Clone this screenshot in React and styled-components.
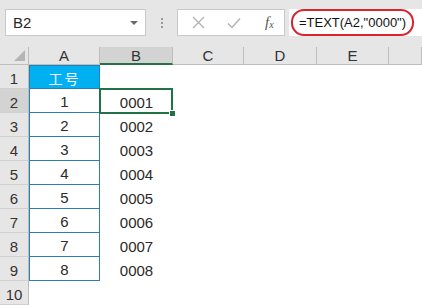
import React from "react";
import styled, { createGlobalStyle } from "styled-components";

const Global = createGlobalStyle`
  html, body { margin: 0; padding: 0; background: #e6e6e6; }
  body { font-family: "Liberation Sans", Arial, "Noto Sans CJK SC", sans-serif; }
`;

const columns = ["A", "B", "C", "D", "E", ""];
const rows = [
  { a: "工号", b: "" },
  { a: "1", b: "0001" },
  { a: "2", b: "0002" },
  { a: "3", b: "0003" },
  { a: "4", b: "0004" },
  { a: "5", b: "0005" },
  { a: "6", b: "0006" },
  { a: "7", b: "0007" },
  { a: "8", b: "0008" },
  { a: "", b: "" },
];

const App = () => (
  <Page>
    <Global />
    <FormulaBar>
      <NameBox>
        B2
        <Caret />
      </NameBox>
      <Grip>
        <span />
        <span />
        <span />
      </Grip>
      <Buttons>
        <IconBtn>
          <svg width="13" height="13" viewBox="0 0 13 13">
            <path d="M1 1L12 12M12 1L1 12" stroke="#b3b3b3" strokeWidth="1.4" fill="none" />
          </svg>
        </IconBtn>
        <IconBtn>
          <svg width="14" height="12" viewBox="0 0 14 12">
            <path d="M1 6.5L5 10.5L13 1.5" stroke="#b3b3b3" strokeWidth="1.5" fill="none" />
          </svg>
        </IconBtn>
        <Fx>
          f<sub>x</sub>
        </Fx>
      </Buttons>
      <Formula>
        <Oval>=TEXT(A2,"0000")</Oval>
      </Formula>
    </FormulaBar>

    <Sheet>
      <Corner>
        <svg width="11" height="11" viewBox="0 0 11 11">
          <path d="M11 0V11H0Z" fill="#b5b5b5" />
        </svg>
      </Corner>
      {columns.map((c, i) => (
        <ColHead key={i} $active={c === "B"}>
          {c}
        </ColHead>
      ))}
      {rows.map((r, i) => (
        <React.Fragment key={i}>
          <RowHead $active={i === 1}>{i + 1}</RowHead>
          {i < 9 ? (
            <BlueCell $title={i === 0} $first={i === 0}>
              {r.a}
            </BlueCell>
          ) : (
            <Cell />
          )}
          {i === 1 ? <Selected>{r.b}</Selected> : <Cell>{r.b}</Cell>}
          <Cell />
          <Cell />
          <Cell />
          <Cell />
        </React.Fragment>
      ))}
    </Sheet>
  </Page>
);

const Page = styled.div`
  width: 422px;
  height: 305px;
  overflow: hidden;
  background: #e6e6e6;
`;

const FormulaBar = styled.div`
  display: flex;
  align-items: center;
  height: 27px;
  padding: 9px 0 11px 5px;
`;

const NameBox = styled.div`
  position: relative;
  box-sizing: border-box;
  width: 141px;
  height: 27px;
  background: #fff;
  border: 1px solid #c9c9c9;
  display: flex;
  align-items: center;
  padding-left: 7px;
  font-size: 15px;
  color: #262626;
`;

const Caret = styled.span`
  position: absolute;
  right: 7px;
  top: 11px;
  width: 0;
  height: 0;
  border-left: 4px solid transparent;
  border-right: 4px solid transparent;
  border-top: 4px solid #6b6b6b;
`;

const Grip = styled.div`
  width: 31px;
  display: flex;
  flex-direction: column;
  align-items: center;
  gap: 2px;
  span {
    width: 2px;
    height: 2px;
    background: #9a9a9a;
  }
`;

const Buttons = styled.div`
  box-sizing: border-box;
  width: 108px;
  height: 27px;
  background: #fff;
  border: 1px solid #c9c9c9;
  display: flex;
  align-items: center;
  padding-left: 13px;
  gap: 22px;
`;

const IconBtn = styled.span`
  display: flex;
  width: 14px;
  justify-content: center;
`;

const Fx = styled.span`
  font-family: "Liberation Serif", "Times New Roman", serif;
  font-style: italic;
  font-size: 15px;
  color: #555;
  margin-left: 2px;
  sub {
    font-size: 10px;
    vertical-align: -1px;
  }
`;

const Formula = styled.div`
  flex: 1;
  margin-left: 4px;
  height: 27px;
  background: #fff;
  display: flex;
  align-items: center;
  padding-left: 2px;
`;

const Oval = styled.div`
  box-sizing: border-box;
  width: 123px;
  height: 27px;
  border: 2px solid #d9232e;
  border-radius: 13px;
  display: flex;
  align-items: center;
  justify-content: center;
  font-size: 13px;
  color: #111;
`;

const Sheet = styled.div`
  display: grid;
  grid-template-columns: 29px 71px 73px 71px 73px 72px 1fr;
  grid-template-rows: 18px;
  grid-auto-rows: 24px;
  background: #fff;
`;

const HeadBase = styled.div`
  box-sizing: border-box;
  background: #e6e6e6;
  color: #333;
  font-size: 15px;
  display: flex;
`;

const Corner = styled(HeadBase)`
  align-items: flex-end;
  justify-content: flex-end;
  padding: 0 3px 3px 0;
  border-right: 1px solid #bdbdbd;
  border-bottom: 1px solid #bdbdbd;
`;

const ColHead = styled(HeadBase)`
  align-items: center;
  justify-content: center;
  background: ${(p) => (p.$active ? "#d3d3d3" : "#e6e6e6")};
  border-right: 1px solid #bdbdbd;
  border-bottom: ${(p) => (p.$active ? "2px solid #217346" : "1px solid #bdbdbd")};
`;

const RowHead = styled(HeadBase)`
  align-items: flex-end;
  justify-content: center;
  padding-bottom: 1px;
  background: ${(p) => (p.$active ? "#d3d3d3" : "#e6e6e6")};
  border-right: 1px solid #bdbdbd;
  border-bottom: 1px solid #d0d0d0;
`;

const Cell = styled.div`
  box-sizing: border-box;
  display: flex;
  align-items: center;
  justify-content: center;
  padding-top: 2px;
  font-size: 15px;
  color: #2a2a2a;
  background: #fff;
`;

const BlueCell = styled(Cell)`
  background: ${(p) => (p.$title ? "#00b0f0" : "#fff")};
  color: ${(p) => (p.$title ? "#fff" : "#2a2a2a")};
  border-left: 1px solid #2a7db5;
  border-right: 1px solid #2a7db5;
  border-bottom: 1px solid #2a7db5;
  border-top: ${(p) => (p.$first ? "1px solid #2a7db5" : "none")};
  font-size: ${(p) => (p.$title ? "14px" : "15px")};
  letter-spacing: ${(p) => (p.$title ? "2px" : "0")};
`;

const Selected = styled(Cell)`
  position: relative;
  &::before {
    content: "";
    position: absolute;
    inset: -1px 0 -1px -1px;
    border: 2px solid #217346;
  }
  &::after {
    content: "";
    position: absolute;
    right: -3px;
    bottom: -4px;
    width: 5px;
    height: 5px;
    background: #217346;
    border: 1px solid #fff;
  }
`;

export default App;
